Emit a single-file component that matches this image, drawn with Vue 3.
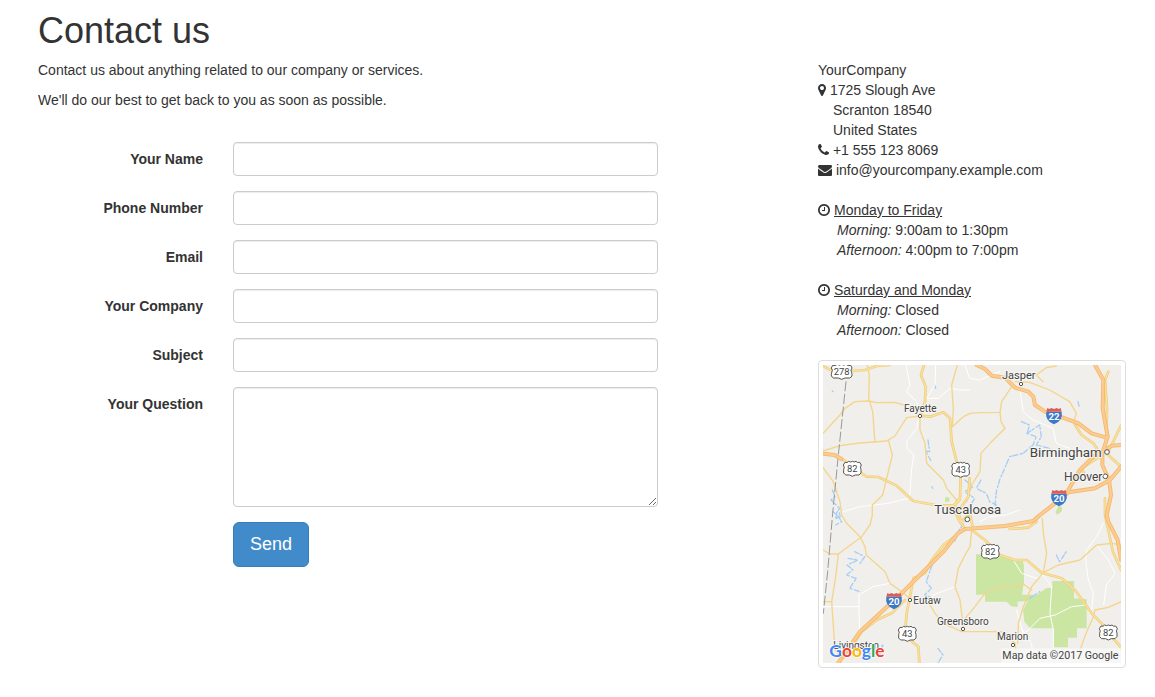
<script setup>
import { ref } from 'vue'

const fields = [
  { id: 'name', label: 'Your Name', type: 'text' },
  { id: 'phone', label: 'Phone Number', type: 'tel' },
  { id: 'email', label: 'Email', type: 'email' },
  { id: 'company', label: 'Your Company', type: 'text' },
  { id: 'subject', label: 'Subject', type: 'text' },
]
const values = ref({ name: '', phone: '', email: '', company: '', subject: '', question: '' })

const hours = [
  { days: 'Monday to Friday', morning: '9:00am to 1:30pm', afternoon: '4:00pm to 7:00pm' },
  { days: 'Saturday and Monday', morning: 'Closed', afternoon: 'Closed' },
]

// Map geometry: three units to one pixel.
const local = [
  '133,0 139,30 137,100 149,140 156,232',
  '0,205 51,150 66,130 96,110 136,108 161,113 216,112 243,120',
  '0,258 51,242 111,234 191,228 216,213 251,158 290,153',
  '196,225 208,270 191,340 179,390 148,420 148,450 141,480 116,515 46,567 21,567 0,555',
  '0,308 31,350 51,410 56,450 71,475 111,515 126,545 130,570 186,620 201,655 236,680 256,697',
  '46,567 38,635 26,710 36,855 60,880',
  '0,710 26,710',
  '403,0 386,60 391,130 388,185 421,155 441,145 471,143 531,142 536,110 566,65',
  '388,185 381,180',
  '531,142 534,170 546,190 501,235 474,265 471,320 446,360 431,410',
  '291,160 291,195 306,235 311,295 361,345 371,370 401,405',
  '446,495 441,545 426,570 406,610 396,665 411,705 421,785',
  '321,720 336,745 361,775 416,800 476,800 536,800 576,835 581,870',
  '658,460 661,505 671,565 661,623 706,600 771,585 821,540 866,535 894,540',
  '661,623 626,665 601,725 586,775 584,835',
  '426,760 456,725 486,685 536,663 560,668 601,657 626,675',
  '894,710 856,727 816,735 811,755 791,800 771,855',
  '576,50 620,52 680,75 740,110 760,145 752,170',
  '660,50 640,30 670,8 700,3',
]
const minor = [
  '249,0 261,60 251,80 281,110 289,150 281,190 251,230 253,250 273,270 266,310 261,380 256,400 196,415 111,425 61,440',
  '441,75 411,75 381,70 346,100 311,100 336,60 338,0',
  '0,725 108,725 108,690 150,665 201,655',
  '108,725 110,800',
  '590,65 600,140 630,165 690,190 700,235 740,250',
  '426,0 440,40 470,45 530,20',
  '396,665 330,690 321,720',
  '571,585 596,625 641,640 661,630 686,665 681,745 691,795 691,847',
  '581,735 600,805 616,795 651,760 696,750 746,725 791,720',
  '841,475 821,515 791,555 788,585 796,645 811,685 806,735',
  '821,540 856,585 876,625 850,660 842,720',
  '590,435 550,450 500,455 470,470',
  '595,790 625,835 635,894',
]
const major = [
  '0,3 32,20',
  '86,18 126,15 161,3 200,0',
  '55,280 80,298 116,325 131,335 166,336 221,362 271,408 336,420 390,422 411,405',
  '303,0 294,30 308,65 306,110 291,152 321,155 361,142 381,160 386,230 401,290 413,335 411,400 400,410 396,440 410,470 426,490',
  '440,340 436,395 405,440 415,470 440,445 448,480',
  '401,510 361,540 326,585 306,625 271,640 261,695 251,745 248,780',
  '261,825 286,845 289,894',
  '246,705 206,745 161,765 116,800 81,855',
  '446,495 486,525 501,540 531,570 576,585 611,585 656,623 716,640 756,675 806,745 836,775 866,815 894,847',
  '856,20 846,45 852,130 850,230',
  '756,180 776,210 811,235 838,275',
  '786,330 776,310 830,275',
  '856,260 894,182',
  '850,265 894,305',
  '846,400 846,450 870,560 894,615',
  '641,470 616,488 560,492',
]
const freeways = [
  '0,266 35,270 55,282',
  '461,0 486,12 506,32 546,38 576,68 616,80 631,95 636,120 666,140 726,160 766,175 806,205 850,218',
  '816,0 841,45 839,130 854,215 838,265 838,300 858,345 864,390 851,450 856,470 884,525 894,585',
  '894,305 861,345 816,370 736,382 696,415 651,450 631,468 546,483 426,492 405,505 361,560 291,630 241,680 171,745 111,800 46,894',
  '736,375 771,315 811,275 838,260 866,242 894,240',
]
const water = [
  '28,375 36,395 24,405 50,430 40,445 56,470 38,480',
  '30,440 42,450 36,462 52,455 48,440',
  '75,580 105,585 72,600 90,615 70,630 100,640 80,670 110,680',
  '95,560 125,575 108,600',
  '595,170 620,180 612,205 640,215 630,240 600,265 560,275 545,310 530,345 520,380 516,420 530,450',
  '612,205 650,180 655,215 640,240 680,250',
  '426,345 450,365 425,380 455,400 440,425',
  '474,345 460,370 490,385 500,410 520,420',
  '315,225 320,260 308,258 325,290',
  '327,365 329,370',
  '440,450 405,500 395,530',
  '327,600 310,650 325,670 305,690 330,700',
  '130,850 120,880 180,840 170,870',
  '345,850 360,870 345,894',
  '700,570 710,590 730,560',
  '765,110 768,125',
  '620,700 650,680',
  '335,60 338,70',
  '28,78 30,80',
]
const shields = [
  { n: '278', x: 56, y: 20 },
  { n: '82', x: 88, y: 311 },
  { n: '43', x: 413, y: 314 },
  { n: '82', x: 502, y: 560 },
  { n: '43', x: 253, y: 806 },
  { n: '82', x: 856, y: 802 },
]
const interstates = [
  { n: '22', x: 693, y: 153 },
  { n: '20', x: 708, y: 399 },
  { n: '20', x: 213, y: 708 },
]
const places = [
  { name: 'Fayette', x: 243, y: 140, size: 30, dx: 291, dy: 153 },
  { name: 'Jasper', x: 537, y: 42, size: 33, dx: 594, dy: 57 },
  { name: 'Birmingham', x: 620, y: 275, size: 40, dx: 852, dy: 261 },
  { name: 'Hoover', x: 723, y: 349, size: 36, dx: 847, dy: 334 },
  { name: 'Tuscaloosa', x: 334, y: 446, size: 39, dx: 433, dy: 463 },
  { name: 'Eutaw', x: 271, y: 716, size: 30, dx: 261, dy: 705 },
  { name: 'Greensboro', x: 342, y: 779, size: 30, dx: 420, dy: 792 },
  { name: 'Marion', x: 522, y: 826, size: 30, dx: 570, dy: 840 },
]
</script>

<template>
  <main class="page">
    <h1>Contact us</h1>
    <div class="columns">
      <section>
        <p>Contact us about anything related to our company or services.</p>
        <p>We'll do our best to get back to you as soon as possible.</p>
        <form class="form" @submit.prevent>
          <div v-for="f in fields" :key="f.id" class="row">
            <label :for="f.id">{{ f.label }}</label>
            <input :id="f.id" v-model="values[f.id]" :type="f.type" class="control" />
          </div>
          <div class="row">
            <label for="question">Your Question</label>
            <textarea id="question" v-model="values.question" class="control area"></textarea>
          </div>
          <div class="row">
            <button type="submit" class="send">Send</button>
          </div>
        </form>
      </section>

      <aside>
        <address>
          <div>YourCompany</div>
          <div>
            <svg class="icon" width="8" height="14" viewBox="384 0 1024 1792"><path d="M1152 640q0-106-75-181t-181-75-181 75-75 181 75 181 181 75 181-75 75-181zm256 0q0 109-33 179l-364 774q-16 33-47.5 52t-67.5 19-67.5-19-46.5-52l-365-774q-33-70-33-179 0-212 150-362t362-150 362 150 150 362z" /></svg>
            1725 Slough Ave
          </div>
          <div class="indent">Scranton 18540</div>
          <div class="indent">United States</div>
          <div>
            <svg class="icon" width="11" height="14" viewBox="192 0 1408 1792"><path d="M1600 1240q0 27-10 70.5t-21 68.5q-21 50-122 106-94 51-186 51-27 0-53-3.5t-57.5-12.5-47-14.5-55.5-20.5-49-18q-98-35-175-83-127-79-264-216t-216-264q-48-77-83-175-3-9-18-49t-20.5-55.5-14.5-47-12.5-57.5-3.5-53q0-92 51-186 56-101 106-122 25-11 68.5-21t70.5-10q14 0 21 3 18 6 53 76 11 19 30 54t35 63.5 31 53.5q3 4 17.5 25t21.5 35.5 7 28.5q0 20-28.5 50t-62 55-62 53-28.5 46q0 9 5 22.5t8.5 20.5 14 24 11.5 19q76 137 174 235t235 174q2 1 19 11.5t24 14 20.5 8.5 22.5 5q18 0 46-28.5t53-62 55-62 50-28.5q14 0 28.5 7t35.5 21.5 25 17.5q25 15 53.5 31t63.5 35 54 30q70 35 76 53 3 7 3 21z" /></svg>
            +1 555 123 8069
          </div>
          <div>
            <svg class="icon" width="14" height="14" viewBox="0 0 1792 1792"><path d="M1792 710v794q0 66-47 113t-113 47h-1472q-66 0-113-47t-47-113v-794q44 49 101 87 362 246 497 345 57 42 92.5 65.5t94.5 48 110 24.5h2q51 0 110-24.5t94.5-48 92.5-65.5q170-123 498-345 57-39 100-87zm0-294q0 79-49 151t-122 123q-376 261-468 325-10 7-42.5 31t-54 38.5-52 32.5-57.5 27-50 9h-2q-23 0-50-9t-57.5-27-52-32.5-54-38.5-42.5-31q-91-64-262-182.5t-205-142.5q-62-42-117-115.5t-55-136.5q0-78 41.5-130t118.5-52h1472q65 0 112.5 47t47.5 113z" /></svg>
            info@yourcompany.example.com
          </div>
        </address>

        <div v-for="h in hours" :key="h.days" class="hours">
          <div>
            <svg class="icon" width="12" height="14" viewBox="128 0 1536 1792"><path d="M1024 544v448q0 14-9 23t-23 9h-320q-14 0-23-9t-9-23v-64q0-14 9-23t23-9h224v-352q0-14 9-23t23-9h64q14 0 23 9t9 23zm416 352q0-148-73-273t-198-198-273-73-273 73-198 198-73 273 73 273 198 198 273 73 273-73 198-198 73-273zm224 0q0 209-103 385.5t-279.5 279.5-385.5 103-385.5-103-279.5-279.5-103-385.5 103-385.5 279.5-279.5 385.5-103 385.5 103 279.5 279.5 103 385.5z" /></svg>
            <u>{{ h.days }}</u>
          </div>
          <div class="slot"><i>Morning:</i> {{ h.morning }}</div>
          <div class="slot"><i>Afternoon:</i> {{ h.afternoon }}</div>
        </div>

        <div class="map">
          <svg viewBox="0 0 894 894">
            <rect class="land" width="894" height="894" />
            <path class="park" d="M459 568H531L576 585 598 583 603 603V650L597 689 642 689 670 669H688V648H753V700L791 703V790H762V818H735V847H692V790H621L604 770 600 735 614 708 584 710V726L564 724 551 710H486V689H459Z" />
            <path class="park" d="M366 397h13v13h-13zM697 442l10-20 10 3v14l-14 10z" />
            <polyline v-for="p in water" :key="p" class="water" :points="p" />
            <polyline v-for="p in minor" :key="p" class="minor" :points="p" />
            <polyline v-for="p in local" :key="p" class="local" :points="p" />
            <polyline class="border" points="69,50 46,270 29,445 14,620 1,745" />
            <polyline v-for="p in major" :key="p" class="major-edge" :points="p" />
            <polyline v-for="p in major" :key="p" class="major" :points="p" />
            <polyline v-for="p in freeways" :key="p" class="freeway-edge" :points="p" />
            <polyline v-for="p in freeways" :key="p" class="freeway" :points="p" />

            <g v-for="s in shields" :key="s.x" :transform="`translate(${s.x} ${s.y})`">
              <path class="shield" :d="s.n.length > 2
                ? 'M-27-19Q-19-16-13-22-7-17 0-22 7-17 13-22 19-16 27-19L31-11Q25-5 30 3 34 15 24 19 8 17 0 23-8 17-24 19-34 15-30 3-25-5-31-11Z'
                : 'M-22-19Q-15-16-11-22-5-18 0-22 5-18 11-22 15-16 22-19L27-11Q22-5 26 3 29 15 20 19 7 17 0 23-7 17-20 19-29 15-26 3-22-5-27-11Z'" />
              <text class="shield-text" y="10">{{ s.n }}</text>
            </g>
            <g v-for="s in interstates" :key="s.x" :transform="`translate(${s.x} ${s.y})`">
              <path class="inter" d="M-23-13H23Q28 14 0 25-28 14-23-13Z" />
              <path class="inter-top" d="M-23-13-20-24-14-21-8-24 0-21 8-24 14-21 20-24 23-13Z" />
              <text class="inter-text" y="13">{{ s.n }}</text>
            </g>

            <text class="place" x="31" y="853" font-size="30">Livingston</text>
            <g v-for="p in places" :key="p.name">
              <circle class="dot" :cx="p.dx" :cy="p.dy" :r="p.size > 35 ? 7 : 5" />
              <text class="place" :x="p.x" :y="p.y" :font-size="p.size">{{ p.name }}</text>
            </g>

            <text class="logo" x="19" y="876"><tspan fill="#4285f4">G</tspan><tspan fill="#ea4335">o</tspan><tspan fill="#fbbc05">o</tspan><tspan fill="#4285f4">g</tspan><tspan fill="#34a853">l</tspan><tspan fill="#ea4335">e</tspan></text>
            <rect class="credit-bg" x="534" y="850" width="360" height="44" />
            <text class="credit" x="538" y="881">Map data ©2017 Google</text>
          </svg>
        </div>
      </aside>
    </div>
  </main>
</template>

<style>
body {
  background: #fff;
}
</style>

<style scoped>
.page {
  box-sizing: border-box;
  padding: 11px 29px 29px 38px;
  color: #333;
  font-family: "Liberation Sans", Arial, sans-serif;
  font-size: 14px;
  line-height: 20px;
}
h1 {
  margin: 0 0 9px;
  font-size: 36px;
  font-weight: 400;
  line-height: 40px;
}
.columns {
  display: grid;
  grid-template-columns: minmax(0, 1fr) 308px;
  gap: 30px;
}
p {
  margin: 0 0 10px;
}
.form {
  display: grid;
  gap: 15px;
  margin-top: 32px;
}
.row {
  display: grid;
  grid-template-columns: 33fr 85fr 20fr;
  column-gap: 30px;
  align-items: start;
}
label {
  padding-top: 7px;
  font-weight: 700;
  text-align: right;
}
.control {
  box-sizing: border-box;
  width: 100%;
  height: 34px;
  margin: 0;
  padding: 6px 12px;
  border: 1px solid #ccc;
  border-radius: 4px;
  background: #fff;
  box-shadow: inset 0 1px 1px rgba(0, 0, 0, 0.075);
  color: #555;
  font: inherit;
}
.area {
  display: block;
  height: 120px;
  resize: vertical;
}
.send {
  grid-column: 2;
  justify-self: start;
  padding: 10px 16px;
  border: 1px solid #357ebd;
  border-radius: 6px;
  background: #428bca;
  color: #fff;
  font-family: inherit;
  font-size: 18px;
  line-height: 23px;
  cursor: pointer;
}
address {
  font-style: normal;
}
.icon {
  fill: #333;
  vertical-align: -2px;
}
.icon + u {
  margin-left: 4px;
}
.indent {
  padding-left: 15px;
}
.slot {
  padding-left: 19px;
}
.hours {
  margin-top: 20px;
}
.map {
  margin-top: 20px;
  padding: 4px;
  border: 1px solid #ddd;
  border-radius: 4px;
}
.map svg {
  display: block;
  width: 100%;
}
polyline {
  fill: none;
  stroke-linejoin: round;
  stroke-linecap: round;
}
.land {
  fill: #f0efeb;
}
.park {
  fill: #cbe6a3;
}
.water {
  stroke: #a4cdf8;
  stroke-width: 4;
  stroke-dasharray: 14 5 6 8;
}
.minor {
  stroke: #fff;
  stroke-width: 3;
}
.local {
  stroke: #f3d58c;
  stroke-width: 4;
}
.border {
  stroke: #999;
  stroke-width: 3;
  stroke-dasharray: 28 10;
}
.major-edge {
  stroke: #eccb7c;
  stroke-width: 8;
}
.major {
  stroke: #fbe19b;
  stroke-width: 4;
}
.freeway-edge {
  stroke: #f3b867;
  stroke-width: 12;
}
.freeway {
  stroke: #fccb94;
  stroke-width: 7;
}
.shield {
  fill: #fff;
  stroke: #555;
  stroke-width: 3;
}
text {
  font-family: Roboto, "Liberation Sans", sans-serif;
}
.shield-text {
  fill: #444;
  font-size: 28px;
  text-anchor: middle;
}
.inter {
  fill: #3b78c8;
}
.inter-top {
  fill: #d75f5c;
}
.inter-text {
  fill: #fff;
  font-size: 29px;
  font-weight: 700;
  text-anchor: middle;
}
.place {
  fill: #444;
  stroke: #f7f6f3;
  stroke-width: 6;
  stroke-linejoin: round;
  paint-order: stroke;
}
.dot {
  fill: #fff;
  stroke: #555;
  stroke-width: 3;
}
.logo {
  font-family: Lato, sans-serif;
  font-size: 52px;
  font-weight: 700;
  stroke: #fff;
  stroke-width: 4;
  stroke-linejoin: round;
  paint-order: stroke;
}
.credit-bg {
  fill: #f9f9f7;
  fill-opacity: 0.8;
}
.credit {
  fill: #444;
  font-size: 32px;
}
</style>
